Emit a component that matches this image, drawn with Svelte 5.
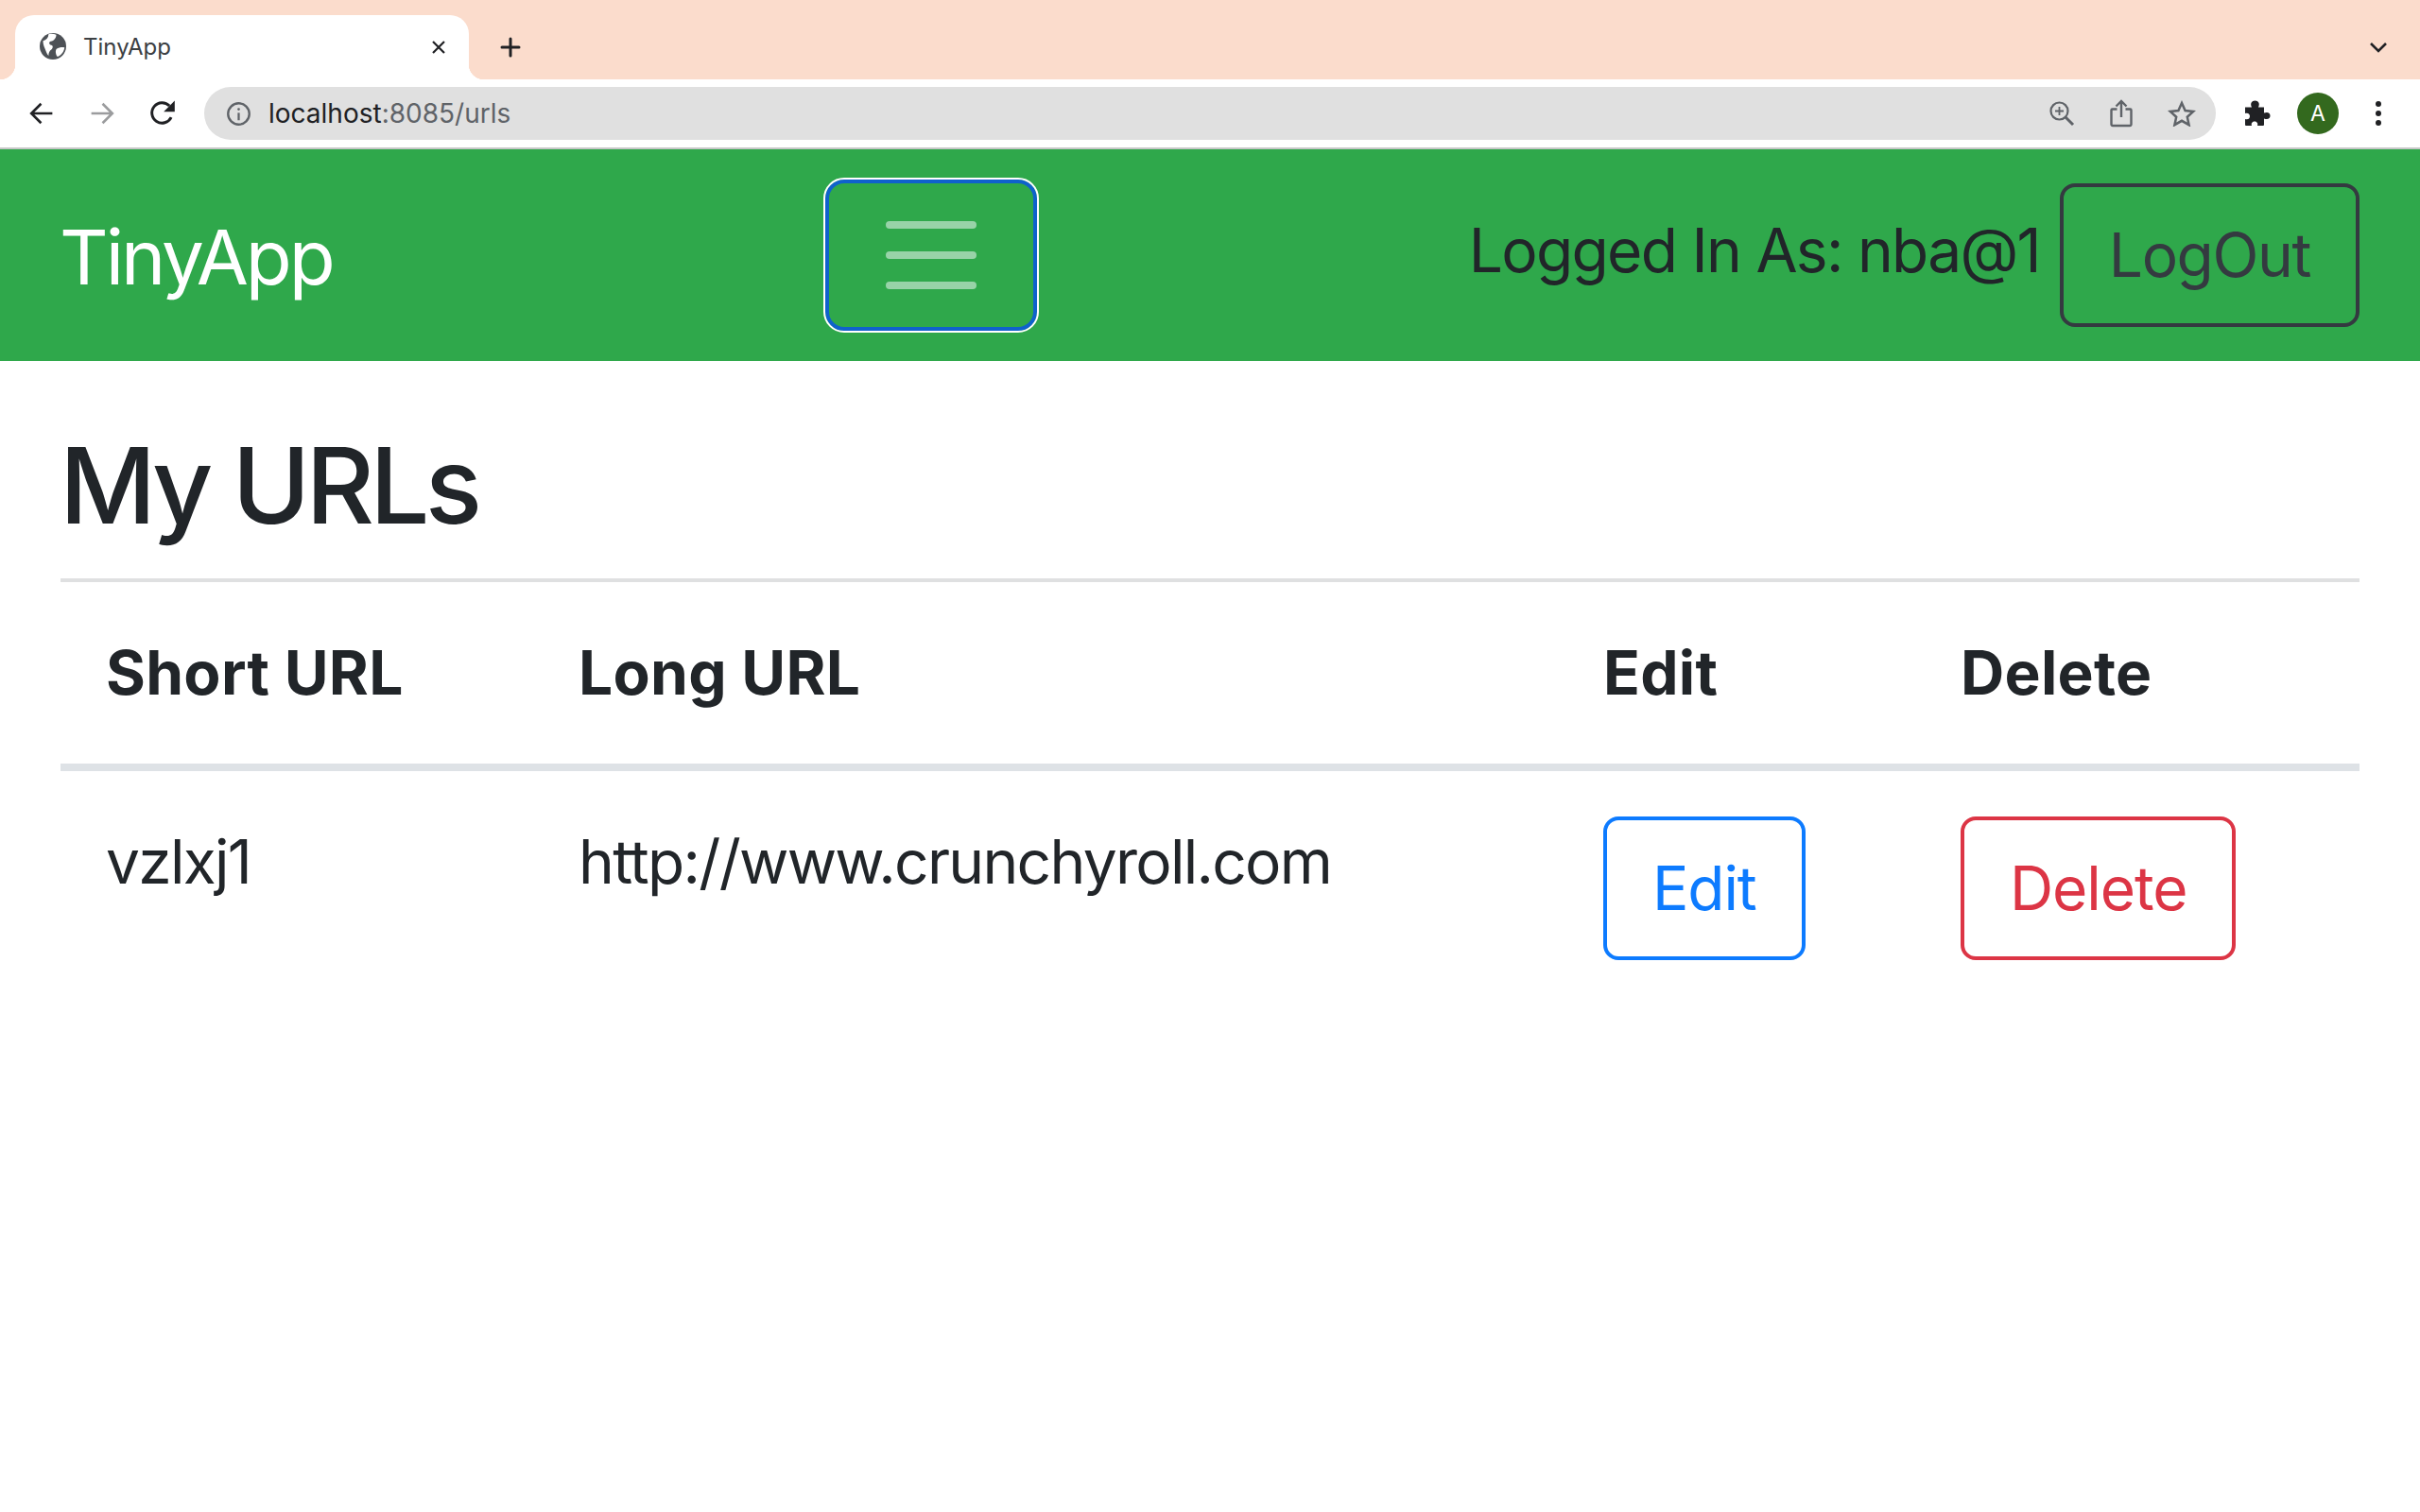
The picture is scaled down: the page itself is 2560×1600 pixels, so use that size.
<script>
    // Single row shown in the urls table
    const urls = [{ short: "vzlxj1", long: "http://www.crunchyroll.com" }];
</script>

<div class="browser">
    <div class="tabstrip">
        <div class="tab">
            <svg class="favicon" viewBox="0 0 24 24" width="28" height="28">
                <circle cx="12" cy="12" r="12" fill="#4d5156" />
                <path d="M3 7c3-1 5-3 5-6 2.500-.6 5-.3 7 .5 0 3-2 5.500-5 6-2 .5-1.500 3 .5 3.500 2 .5 1.500 3 0 4-1.500 1-2.500 3-2.500 5.500-2-2-2.500-5-3.500-7C4 12 3 10 3 7z" fill="#fff" />
                <path d="M15 14.500c2.500-1.500 5-2 7.500-1.500-.5 4-3 7-6.500 8.500-1.500-2-2-5-1-7z" fill="#fff" />
            </svg>
            <span class="tab-title">TinyApp</span>
            <svg class="close" viewBox="0 0 16 16" width="16" height="16">
                <path d="M2 2l12 12M14 2L2 14" stroke="#202124" stroke-width="2.2" />
            </svg>
        </div>
        <svg class="plus" viewBox="0 0 24 24" width="24" height="24">
            <path d="M12 3v18M3 12h18" stroke="#202124" stroke-width="3" stroke-linecap="round" />
        </svg>
        <svg class="chevron" viewBox="0 0 20 12" width="20" height="12">
            <path d="M2 2l8 8 8-8" fill="none" stroke="#202124" stroke-width="2.6" />
        </svg>
    </div>

    <div class="toolbar">
        <svg viewBox="0 0 24 24" width="26" height="26" class="back">
            <path d="M22.5 12H2.500M11.500 2.500L2 12l9.500 9.500" fill="none" stroke="#202124" stroke-width="2.400" />
        </svg>
        <svg viewBox="0 0 24 24" width="26" height="26" class="forward">
            <path d="M1.500 12h20M12.500 2.500L22 12l-9.500 9.500" fill="none" stroke="#9b9c9e" stroke-width="2.400" />
        </svg>
        <svg viewBox="0 0 24 24" width="28" height="28" class="reload">
            <path d="M19.800 15.500A9.200 9.200 0 1 1 18.200 5.200" fill="none" stroke="#202124" stroke-width="2.500" />
            <path d="M23 0.500V10.500H13z" fill="#202124" />
        </svg>

        <div class="omnibox">
            <svg viewBox="0 0 24 24" width="27" height="27" class="info">
                <circle cx="12" cy="12" r="10" fill="none" stroke="#5f6368" stroke-width="2.100" />
                <path d="M12 11v7" stroke="#5f6368" stroke-width="2" />
                <circle cx="12" cy="7.600" r="1.200" fill="#5f6368" />
            </svg>
            <span class="address"><span class="host">localhost</span>:8085/urls</span>
            <span class="omni-spacer"></span>
            <svg viewBox="0 0 28 28" width="28" height="28">
                <circle cx="11.500" cy="11.500" r="9" fill="none" stroke="#5f6368" stroke-width="2.200" />
                <path d="M18 18l8 8" stroke="#5f6368" stroke-width="3" />
                <path d="M11.500 7v9M7 11.500h9" stroke="#5f6368" stroke-width="1.800" />
            </svg>
            <svg viewBox="0 0 24 30" width="24" height="30">
                <path d="M7.500 10.500H2.500a1 1 0 0 0-1 1v15a1.500 1.500 0 0 0 1.500 1.500h18a1.500 1.500 0 0 0 1.500-1.500v-15a1 1 0 0 0-1-1h-5" fill="none" stroke="#5f6368" stroke-width="2.400" />
                <path d="M12 19V2.500M6.500 7.500L12 2l5.500 5.500" fill="none" stroke="#5f6368" stroke-width="2.400" />
            </svg>
            <svg viewBox="0 0 30 28" width="30" height="28">
                <path d="M15 3l3.600 8 8.600.9-6.400 5.800 1.800 8.500L15 21.800l-7.600 4.400 1.800-8.500L2.800 11.900l8.600-.9z" fill="none" stroke="#5f6368" stroke-width="2.500" />
            </svg>
        </div>

        <svg viewBox="0 0 28 28" width="28" height="28" class="puzzle">
            <path d="M1 7.500h7c-2-4 0-7 3.500-7s5.500 3 3.500 7h6v6c4-1.500 6.500 0 6.500 3s-2.500 4.500-6.500 3v6.500a1 1 0 0 1-1 1h-6c1-3-1-4.500-3-4.500s-4 1.500-3 4.500H2a1 1 0 0 1-1-1v-6c3 1 5-.5 5-3s-2-4-5-3z" fill="#202124" />
        </svg>
        <div class="avatar">A</div>
        <svg viewBox="0 0 8 28" width="8" height="28" class="dots">
            <circle cx="4" cy="4" r="3" fill="#202124" />
            <circle cx="4" cy="14" r="3" fill="#202124" />
            <circle cx="4" cy="24" r="3" fill="#202124" />
        </svg>
    </div>
</div>

<nav class="navbar">
    <span class="brand">TinyApp</span>
    <button class="toggler" aria-label="Toggle navigation">
        <span class="bars"><i></i><i></i><i></i></span>
    </button>
    <div class="nav-right">
        <span class="logged">Logged In As: nba@1</span>
        <button class="btn btn-logout">LogOut</button>
    </div>
</nav>

<main class="content">
    <h1>My URLs</h1>
    <hr />
    <table>
        <colgroup>
            <col style="width: 500px" />
            <col style="width: 1084px" />
            <col style="width: 378px" />
            <col />
        </colgroup>
        <thead>
            <tr>
                <th>Short URL</th>
                <th>Long URL</th>
                <th>Edit</th>
                <th>Delete</th>
            </tr>
        </thead>
        <tbody>
            {#each urls as url}
                <tr>
                    <td>{url.short}</td>
                    <td>{url.long}</td>
                    <td><button class="btn btn-edit">Edit</button></td>
                    <td><button class="btn btn-delete">Delete</button></td>
                </tr>
            {/each}
        </tbody>
    </table>
</main>

<style>
    :global(body) {
        font-family: Inter, "Liberation Sans", sans-serif;
        color: #212529;
        background: #fff;
    }

    /* Chrome del navegador */
    .tabstrip {
        height: 84px;
        background: #fbdccc;
        display: flex;
        align-items: flex-end;
        box-sizing: border-box;
        padding-left: 16px;
    }
    .tab {
        width: 480px;
        height: 68px;
        background: #fff;
        border-radius: 20px 20px 0 0;
        display: flex;
        align-items: center;
        box-sizing: border-box;
        padding: 0 24px 0 26px;
        position: relative;
    }
    .tab::before,
    .tab::after {
        content: "";
        position: absolute;
        bottom: 0;
        width: 16px;
        height: 16px;
    }
    .tab::before {
        left: -16px;
        background: radial-gradient(circle at 0 0, #fbdccc 16px, #fff 16.5px);
    }
    .tab::after {
        right: -16px;
        background: radial-gradient(circle at 100% 0, #fbdccc 16px, #fff 16.5px);
    }
    .favicon {
        flex: none;
        margin-bottom: 3px;
    }
    .tab-title {
        font-size: 24px;
        margin-left: 18px;
        margin-bottom: 2px;
        color: #3c4043;
        flex: 1;
    }
    .plus {
        margin: 0 0 22px 32px;
    }
    .chevron {
        margin: 0 34px 28px auto;
    }

    .toolbar {
        height: 72px;
        background: #fff;
        border-bottom: 2px solid #c6c7c7;
        display: flex;
        align-items: center;
    }
    .back {
        margin-left: 31px;
    }
    .forward {
        margin-left: 38px;
    }
    .reload {
        margin-left: 37px;
    }
    .omnibox {
        width: 2128px;
        height: 56px;
        margin-left: 30px;
        border-radius: 28px;
        background: #e0e0e0;
        display: flex;
        align-items: center;
        box-sizing: border-box;
        padding: 0 21px 0 23px;
        gap: 37px;
    }
    .info {
        margin-right: -19px;
    }
    .address {
        font-size: 28px;
        color: #5f6368;
    }
    .host {
        color: #202124;
    }
    .omni-spacer {
        flex: 1;
    }
    .puzzle {
        margin-left: 30px;
    }
    .avatar {
        width: 44px;
        height: 44px;
        margin-left: 28px;
        border-radius: 50%;
        background: #33691e;
        color: #fff;
        font-size: 23px;
        display: flex;
        align-items: center;
        justify-content: center;
    }
    .dots {
        margin-left: 38px;
    }

    /* Barra de navegación */
    .navbar {
        height: 224px;
        background: #2fa84b;
        display: flex;
        align-items: center;
        box-sizing: border-box;
        padding: 0 64px;
    }
    .brand {
        font-size: 80px;
        color: #fff;
        line-height: 120px;
        margin: 4px 0 0 -1px;
        letter-spacing: -3px;
    }
    .toggler {
        width: 224px;
        height: 160px;
        margin-left: 521px;
        box-sizing: border-box;
        background: transparent;
        border: 4px solid #0f62cc;
        outline: 2px solid #fff;
        border-radius: 20px;
        display: flex;
        align-items: center;
        justify-content: center;
        padding: 0;
    }
    .bars {
        display: flex;
        flex-direction: column;
        gap: 24px;
        width: 96px;
    }
    .bars i {
        display: block;
        height: 8px;
        border-radius: 4px;
        background: #98d3a8;
    }
    .nav-right {
        margin-left: auto;
        display: flex;
        align-items: center;
        gap: 21px;
    }
    .logged {
        font-size: 64px;
        margin-bottom: 12px;
        letter-spacing: -1.7px;
    }

    /* Botones */
    .btn {
        font-family: inherit;
        font-size: 64px;
        line-height: 96px;
        padding: 24px 48px;
        background: transparent;
        border: 4px solid;
        border-radius: 16px;
        box-sizing: border-box;
        letter-spacing: -1.1px;
    }
    .btn-logout {
        color: #343a40;
        border-color: #343a40;
        letter-spacing: -1.4px;
    }
    .btn-edit {
        color: #0d7bff;
        border-color: #0d7bff;
    }
    .btn-delete {
        color: #dc3545;
        border-color: #dc3545;
    }

    /* Contenido */
    .content {
        padding: 0 64px;
    }
    h1 {
        font-size: 112px;
        font-weight: 500;
        line-height: 134px;
        letter-spacing: -4.9px;
        margin: 0 0 0 -1px;
        padding: 64px 0 32px;
        color: #212529;
    }
    hr {
        border: 0;
        height: 4px;
        background: #dfe0e1;
        margin: 0;
    }
    table {
        width: 100%;
        table-layout: fixed;
        border-collapse: collapse;
    }
    th {
        font-size: 64px;
        font-weight: 700;
        line-height: 96px;
        letter-spacing: 0.3px;
        text-align: left;
        padding: 48px;
        border-bottom: 8px solid #dee2e6;
    }
    td {
        font-size: 64px;
        line-height: 96px;
        padding: 48px;
        vertical-align: top;
        letter-spacing: -1.7px;
    }
    td .btn {
        letter-spacing: -1.1px;
    }
</style>
